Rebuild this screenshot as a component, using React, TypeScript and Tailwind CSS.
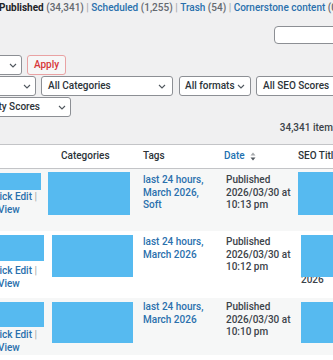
// App.tsx
const BLUE = "bg-[#56baf0]";

function Chevron() {
  return (
    <svg width="8" height="5" viewBox="0 0 8 5" className="shrink-0">
      <path d="M1 1l3 3 3-3" fill="none" stroke="#50575e" strokeWidth="1.1" />
    </svg>
  );
}

function SortArrows() {
  return (
    <svg width="6" height="9" viewBox="0 0 6 9" className="ml-[5px]">
      <path d="M3 0.5L5.5 3.5H0.5Z" fill="#a7aaad" />
      <path d="M3 8.5L5.5 5.5H0.5Z" fill="#50575e" />
    </svg>
  );
}

const rows = [
  {
    bg: "bg-[#f6f7f7]",
    height: "h-[62px]",
    titleBox: "mt-[4px] h-[17px] w-[41px]",
    actionsMt: "mt-[1px]",
    catBox: "mt-[3px] h-[43px] ml-[2px] w-[82px]",
    textPt: "pt-[5px]",
    tags: ["last 24 hours,", "March 2026,", "Soft"],
    time: "10:13 pm",
    seoBox: "mt-[3px] h-[43px] ml-[5px]",
    seoText: "",
  },
  {
    bg: "bg-white",
    height: "h-[67px]",
    titleBox: "mt-[4px] h-[26px] w-[44px]",
    actionsMt: "mt-[4px]",
    catBox: "mt-[4px] h-[42px] ml-[6px] w-[81px]",
    textPt: "pt-[5px]",
    tags: ["last 24 hours,", "March 2026"],
    time: "10:12 pm",
    seoBox: "mt-[4px] h-[42px] ml-[8px]",
    seoText: "2026",
  },
  {
    bg: "bg-[#f6f7f7]",
    height: "h-[57px]",
    titleBox: "mt-[4px] h-[25px] w-[44px]",
    actionsMt: "mt-[2px]",
    catBox: "mt-[4px] h-[41px] ml-[6px] w-[81px]",
    textPt: "pt-[3px]",
    tags: ["last 24 hours,", "March 2026"],
    time: "10:10 pm",
    seoBox: "mt-[4px] h-[41px] ml-[8px]",
    seoText: "",
  },
];

export default function App() {
  return (
    <div className="w-[333px] h-[360px] overflow-hidden bg-[#f0f0f1] font-['Roboto','Liberation_Sans',Arial,sans-serif] font-medium text-[10px] leading-[12.5px] text-[#3c434a]">
      {/* status links */}
      <div className="h-[16px] flex items-center whitespace-nowrap -ml-px">
        <span className="font-bold text-[#1d2327]">Published</span>
        <span className="text-[#646970]">&nbsp;(34,341)</span>
        <span className="text-[#a7aaad]">&nbsp;|&nbsp;</span>
        <span className="text-[#2a70ad]">Scheduled</span>
        <span className="text-[#646970]">&nbsp;(1,255)</span>
        <span className="text-[#a7aaad]">&nbsp;|&nbsp;</span>
        <span className="text-[#2a70ad]">Trash</span>
        <span className="text-[#646970]">&nbsp;(54)</span>
        <span className="text-[#a7aaad]">&nbsp;|&nbsp;</span>
        <span className="text-[#2a70ad]">Cornerstone content</span>
        <span className="text-[#646970]">&nbsp;(0)</span>
      </div>

      {/* search */}
      <div className="flex justify-end mt-[10px]">
        <div className="w-[72px] h-[18px] -mr-[13px] bg-white border border-[#8c8f94] rounded-[4px]" />
      </div>

      {/* filters */}
      <div className="mt-[11px] flex flex-col gap-[1px] whitespace-nowrap">
        <div className="flex gap-[5px] h-[20px]">
          <div className="-ml-[60px] w-[82px] shrink-0 bg-white border border-[#8c8f94] rounded-[3px] flex items-center justify-end pr-[4px]">
            <Chevron />
          </div>
          <div className="w-[39px] shrink-0 border border-[#e9a2a3] rounded-[3px] bg-[#f6f7f7] text-[#d63638] flex items-center justify-center">
            Apply
          </div>
        </div>
        <div className="flex h-[20px]">
          <div className="-ml-[60px] w-[96px] shrink-0 bg-white border border-[#8c8f94] rounded-[3px] flex items-center justify-end pr-[4px]">
            <Chevron />
          </div>
          <div className="ml-[5px] w-[132px] shrink-0 bg-white border border-[#8c8f94] rounded-[3px] flex items-center justify-between pl-[6px] pr-[6px] text-[#2c3338]">
            All Categories
            <Chevron />
          </div>
          <div className="ml-[6px] w-[72px] shrink-0 bg-white border border-[#8c8f94] rounded-[3px] flex items-center justify-between pl-[5px] pr-[5px] text-[#2c3338]">
            All formats
            <Chevron />
          </div>
          <div className="ml-[5px] w-[110px] shrink-0 bg-white border border-[#8c8f94] rounded-[3px] flex items-center pl-[6px] text-[#2c3338]">
            All SEO Scores
          </div>
        </div>
        <div className="flex h-[20px]">
          <div className="-ml-[60px] w-[131px] shrink-0 bg-white border border-[#8c8f94] rounded-[3px] flex items-center justify-end gap-[18px] pr-[4px] text-[#2c3338]">
            All Readability Scores
            <Chevron />
          </div>
        </div>
      </div>

      {/* count */}
      <div className="mt-[5px] h-[12px] flex justify-end whitespace-nowrap -mr-[5px] text-[#3c434a]">
        34,341 items
      </div>

      {/* table */}
      <div className="mt-[10px] border-t border-[#c3c4c7]">
        <div className="h-[24px] bg-white border-b border-[#c3c4c7] grid grid-cols-[46px_92px_81px_74px_1fr] items-center whitespace-nowrap text-[#2c3338]">
          <div />
          <div className="pl-[15px]">Categories</div>
          <div className="pl-[5px]">Tags</div>
          <div className="pl-[5px] flex items-center text-[#2271b1]">
            Date
            <SortArrows />
          </div>
          <div className="pl-[5px] overflow-hidden">SEO Title</div>
        </div>

        {rows.map((r, i) => (
          <div
            key={i}
            className={`${r.bg} ${r.height} grid grid-cols-[46px_92px_81px_74px_1fr] whitespace-nowrap`}
          >
            <div>
              <div className={`${BLUE} ${r.titleBox}`} />
              <div className={`${r.actionsMt} -ml-[13px] text-[#2a70ad]`}>
                Quick Edit <span className="text-[#a7aaad]">|</span>
              </div>
              <div className="-ml-[2px] text-[#2a70ad]">View</div>
            </div>
            <div>
              <div className={`${BLUE} ${r.catBox}`} />
            </div>
            <div className={`${r.textPt} pl-[5px] text-[#2a70ad]`}>
              {r.tags.map((t) => (
                <div key={t}>{t}</div>
              ))}
            </div>
            <div className={`${r.textPt} pl-[7px] text-[#3c434a]`}>
              <div>Published</div>
              <div>2026/03/30 at</div>
              <div>{r.time}</div>
            </div>
            <div>
              <div className={`${BLUE} ${r.seoBox} relative z-10`} />
              {r.seoText && (
                <div className="-mt-[3px] ml-[8px] text-[#3c434a]">{r.seoText}</div>
              )}
            </div>
          </div>
        ))}
        <div className="h-[20px] bg-white" />
      </div>
    </div>
  );
}
